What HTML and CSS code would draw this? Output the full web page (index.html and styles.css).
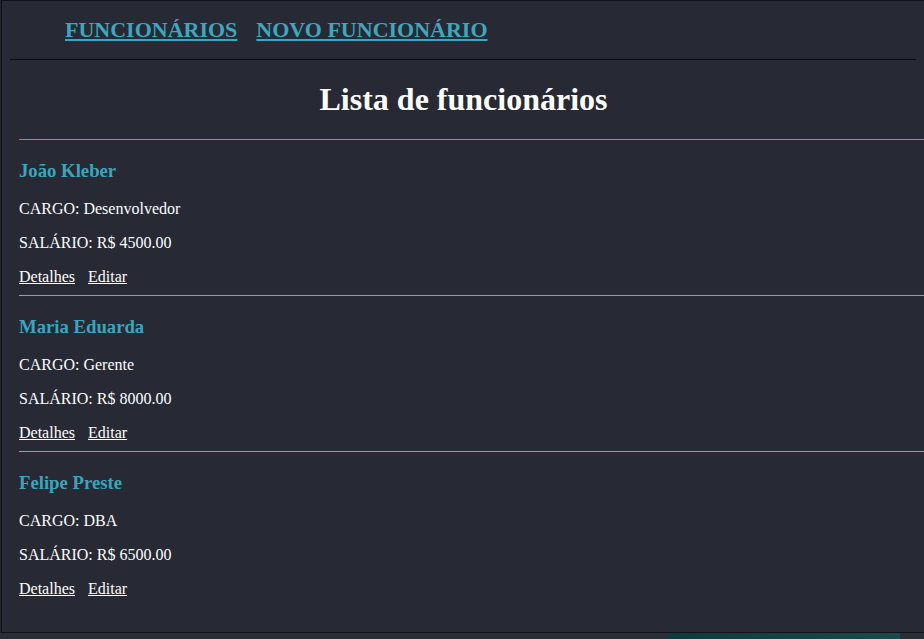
FILE: index.html
```html
<!DOCTYPE html>
<html lang="pt-BR">
<head>
<meta charset="utf-8">
<title>Lista de funcionários</title>
<link rel="stylesheet" href="styles.css">
</head>
<body>
<div class="app">
  <header class="topbar">
    <nav class="nav">
      <a href="#" class="nav-link">FUNCIONÁRIOS</a>
      <a href="#" class="nav-link">NOVO FUNCIONÁRIO</a>
    </nav>
    <hr class="divider">
  </header>
  <main class="content">
    <h1 class="title">Lista de funcionários</h1>
    <ul class="list">
      <li class="item">
        <h3 class="name">João Kleber</h3>
        <p class="field">CARGO: Desenvolvedor</p>
        <p class="field">SALÁRIO: R$ 4500.00</p>
        <p class="actions"><a href="#">Detalhes</a><a href="#">Editar</a></p>
      </li>
      <li class="item">
        <h3 class="name">Maria Eduarda</h3>
        <p class="field">CARGO: Gerente</p>
        <p class="field">SALÁRIO: R$ 8000.00</p>
        <p class="actions"><a href="#">Detalhes</a><a href="#">Editar</a></p>
      </li>
      <li class="item">
        <h3 class="name">Felipe Preste</h3>
        <p class="field">CARGO: DBA</p>
        <p class="field">SALÁRIO: R$ 6500.00</p>
        <p class="actions"><a href="#">Detalhes</a><a href="#">Editar</a></p>
      </li>
    </ul>
  </main>
</div>
<div class="strip"></div>
</body>
</html>
```
FILE: styles.css
```css
html, body {
  margin: 0;
  padding: 0;
  background: #22242c;
  overflow: hidden;
}
body {
  font-family: "Liberation Serif", "Times New Roman", serif;
  color: #ffffff;
  width: 924px;
  height: 639px;
}
.app {
  box-sizing: border-box;
  margin-left: 1px;
  width: 925px;
  height: 633px;
  border: 1px solid #121318;
  background: #272935;
  overflow: hidden;
}
.topbar {
  padding-top: 16px;
}
.nav {
  display: flex;
  gap: 19px;
  padding-left: 63px;
}
.nav-link {
  font-size: 22px;
  font-weight: bold;
  color: #3ea6bd;
  text-decoration: underline;
}
.divider {
  margin: 16px 9px 0 8px;
  border: 0;
  border-top: 1px solid #0c0c10;
  height: 0;
}
.title {
  margin: 21px 0 21px;
  font-size: 32px;
  font-weight: bold;
  text-align: center;
  line-height: 37px;
}
.list {
  list-style: none;
  margin: 0 0 0 17px;
  padding: 0;
  width: 1000px;
  border-top: 1px solid #3aaec4;
}
.item {
  padding-bottom: 9px;
  border-bottom: 1px solid #7fa9b3;
}
.item:last-child {
  border-bottom: 0;
}
.name {
  margin: 20px 0 18px;
  font-size: 18.72px;
  font-weight: bold;
  color: #3fa3ba;
  line-height: 22px;
}
.field, .actions {
  margin: 16px 0 0;
  font-size: 16px;
  line-height: 18px;
}
.actions {
  display: flex;
  gap: 13px;
}
.actions a {
  color: #ffffff;
  text-decoration: underline;
}
.strip {
  height: 6px;
  background: linear-gradient(to right, #2b2d36 0, #2b2d36 668px, #0f3a3c 668px, #1a4a4a 900px, #2b2d36 900px);
}
```
